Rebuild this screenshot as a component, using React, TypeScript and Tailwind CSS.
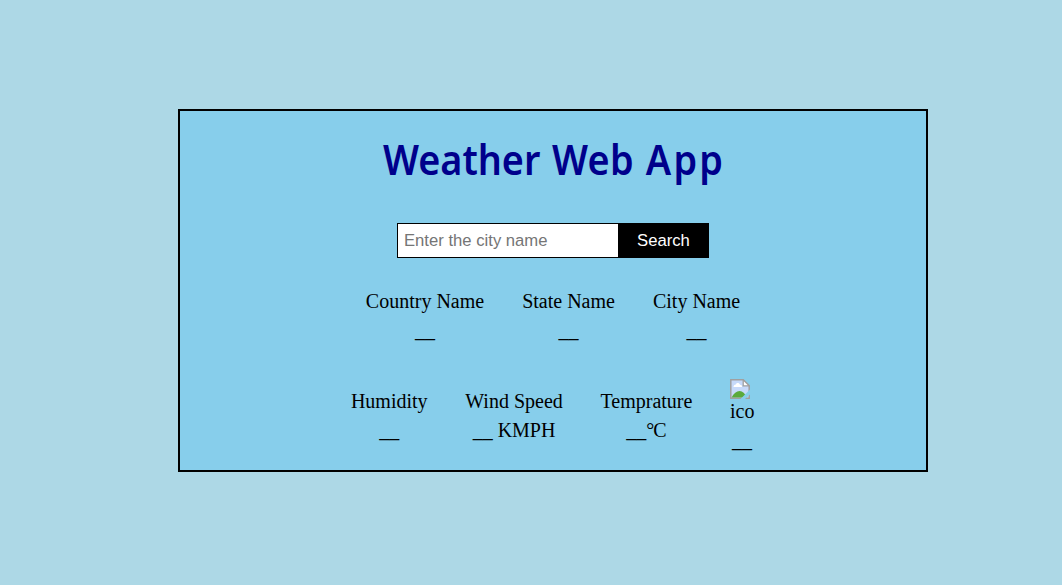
export default function App() {
  return (
    <main className="flex h-[585px] w-[1062px] items-start bg-[#add8e6] pt-[109px] pl-[178px] font-['Liberation_Serif',serif] text-[20px] leading-[29px] text-black">
      <section className="flex h-[363px] w-[750px] flex-col items-center border-2 border-black bg-[#87ceeb]">
        <h1 className="mt-[22px] h-[54px] origin-center scale-x-[0.9] whitespace-nowrap font-['Noto_Sans',sans-serif] text-[42px] leading-[52px] font-semibold [word-spacing:2px] text-[#00008b]">Weather <span className="tracking-[0.3px]">Web </span><span className="-mr-[2.5px] tracking-[2.5px]">App</span></h1>
        <form className="mt-[36px] flex h-[35px] w-[312px] font-['Liberation_Sans',sans-serif] text-[16.67px]" onSubmit={(e) => e.preventDefault()}>
          <input placeholder="Enter the city name" className="w-[222px] border border-black bg-white px-[6px] placeholder:text-[#757575]" />
          <button className="w-[90px] bg-black pr-px text-white">Search</button>
        </form>
        <div className="mt-[29px] flex gap-[38px] whitespace-nowrap text-center">
          <div><p>Country Name</p><p>__</p></div>
          <div><p>State Name</p><p>__</p></div>
          <div><p>City Name</p><p>__</p></div>
        </div>
        <div className="mt-[32px] mr-px flex items-center gap-[37.7px] whitespace-nowrap text-center">
          <div><p>Humidity</p><p>__</p></div>
          <div><p>Wind Speed</p><p>__ KMPH</p></div>
          <div><p>Temprature</p><p>__<span className="tracking-[-1px]">°</span>C</p></div>
          <div className="w-[24px] pt-[2px]">
            <svg className="block" width="20" height="20" viewBox="0 0 20 20">
              <path d="M.8.8h12.4l6 6v12.4H.8z" fill="#c7dafa" stroke="#a0a0a0" strokeWidth="1.5" />
              <path d="M3.5 8c0-1.8 1-2.3 2-2.3 .8-2.3 3.7-2.3 4.5 0 1.6 0 2 .9 2 2.3z" fill="#fff" />
              <path d="M1.6 18.4c2-4 5-6.4 8-6.4s5.5 2.4 7 6.4z" fill="#5baa3c" />
              <path d="M13.2.8v6h6z" fill="#fff" stroke="#a0a0a0" strokeWidth="1.3" />
              <path d="M20 10.5L10.5 20h4.5l5-4.5z" fill="#87ceeb" />
            </svg>
            <p className="-mt-[2px]">ico</p><p>__</p>
          </div>
        </div>
      </section>
    </main>
  );
}
